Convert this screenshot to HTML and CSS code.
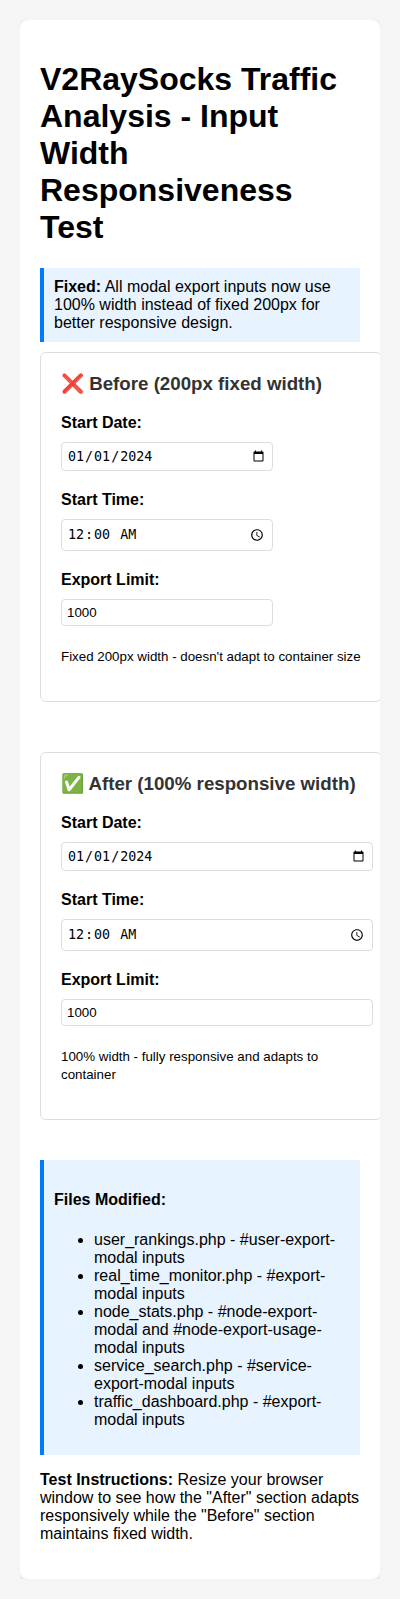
FILE: index.html
```html
<!DOCTYPE html>
<html lang="en">
<head>
<meta charset="UTF-8">
<meta name="viewport" content="width=device-width, initial-scale=1.0">
<title>V2RaySocks Traffic Analysis - Input Width Responsiveness Test</title>
<link rel="stylesheet" href="styles.css">
</head>
<body>
<div class="container">
  <h1>V2RaySocks Traffic Analysis - Input Width Responsiveness Test</h1>
  <div class="note"><strong>Fixed:</strong> All modal export inputs now use 100% width instead of fixed 200px for better responsive design.</div>
  <div class="comparison">
    <div class="section before">
      <h3>❌ Before (200px fixed width)</h3>
      <div class="group"><label>Start Date:</label><input type="date" value="2024-01-01"></div>
      <div class="group"><label>Start Time:</label><input type="time" value="00:00"></div>
      <div class="group"><label>Export Limit:</label><input type="number" value="1000"></div>
      <p><small>Fixed 200px width - doesn't adapt to container size</small></p>
    </div>
    <div class="section after">
      <h3>✅ After (100% responsive width)</h3>
      <div class="group"><label>Start Date:</label><input type="date" value="2024-01-01"></div>
      <div class="group"><label>Start Time:</label><input type="time" value="00:00"></div>
      <div class="group"><label>Export Limit:</label><input type="number" value="1000"></div>
      <p><small>100% width - fully responsive and adapts to container</small></p>
    </div>
  </div>
  <div class="note">
    <h4>Files Modified:</h4>
    <ul>
      <li>user_rankings.php - #user-export-modal inputs</li>
      <li>real_time_monitor.php - #export-modal inputs</li>
      <li>node_stats.php - #node-export-modal and #node-export-usage-modal inputs</li>
      <li>service_search.php - #service-export-modal inputs</li>
      <li>traffic_dashboard.php - #export-modal inputs</li>
    </ul>
  </div>
  <p><strong>Test Instructions:</strong> Resize your browser window to see how the "After" section adapts responsively while the "Before" section maintains fixed width.</p>
</div>
</body>
</html>
```
FILE: styles.css
```css
body {
  font-family: "Liberation Sans", Arial, sans-serif;
  margin: 20px;
  background: #f5f5f5;
}
.container {
  background: #fff;
  padding: 20px;
  border-radius: 8px;
  box-shadow: 0 2px 10px rgba(0, 0, 0, 0.1);
}
.note {
  background: #e7f3ff;
  border-left: 4px solid #007bff;
  padding: 10px;
  margin: 10px 0;
}
.comparison {
  display: flex;
  flex-wrap: wrap;
  gap: 30px;
  margin-bottom: 20px;
}
.section {
  flex: 1;
  min-width: 300px;
  padding: 20px;
  background: #fff;
  border: 1px solid #ddd;
  border-radius: 6px;
  margin-bottom: 20px;
}
.section h3 {
  margin-top: 0;
  color: #333;
}
.group {
  margin-bottom: 15px;
}
label {
  display: block;
  margin-bottom: 5px;
  font-weight: bold;
}
input {
  width: 200px;
  padding: 5px;
  margin: 5px 0;
  border: 1px solid #ddd;
  border-radius: 4px;
}
.after input {
  width: 100%;
}
```
